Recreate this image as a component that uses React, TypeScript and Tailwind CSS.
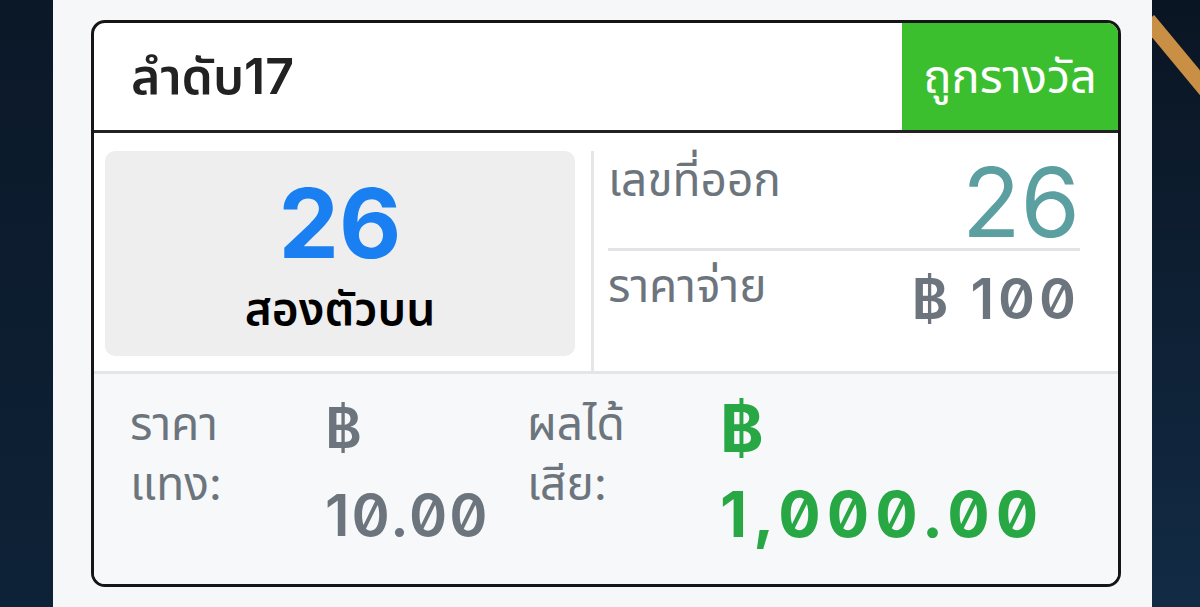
import React from "react";

const thai = "font-['Inter','Noto_Sans_Thai','Noto_Sans',sans-serif]";

const App: React.FC = () => {
  return (
    <div className={`flex h-[607px] w-full overflow-hidden ${thai}`}>
      {/* left backdrop */}
      <div className="w-[53px] bg-gradient-to-b from-[#0b1828] to-[#0e2237]" />

      {/* page panel */}
      <div className="flex-1 bg-[#f6f7f9] pl-[38px] pr-[31px] pt-[20px]">
        <div className="flex h-[567px] flex-col overflow-hidden rounded-[14px] border-[3px] border-[#151515] bg-white">
          {/* header */}
          <div className="flex h-[110px] border-b-[3px] border-[#222]">
            <div className="flex flex-1 items-center pl-[37px] text-[50px] font-semibold text-[#222]">
              ลำดับ17
            </div>
            <div className="flex w-[216px] items-center justify-center bg-[#3cbf2f] text-[47px] text-white">
              ถูกรางวัล
            </div>
          </div>

          {/* number + result */}
          <div className="flex h-[238px] pl-[11px] pr-[38px]">
            <div className="mt-[18px] mb-[15px] flex w-[470px] flex-col items-center justify-center rounded-[10px] bg-[#eeeeee]">
              <div className="mt-[4px] text-[96px] font-bold leading-[84px] text-[#1a80f2] slashed-zero">26</div>
              <div className="mt-[20px] text-[46px] font-semibold leading-none text-black">สองตัวบน</div>
            </div>
            <div className="ml-[16px] mt-[18px] w-[3px] bg-[#e4e6e9]" />
            <div className="flex flex-1 flex-col pl-[14px]">
              <div className="flex items-start justify-between border-b-[3px] border-[#e2e4e8] pt-[16px] pb-[6px]">
                <span className="text-[46px] leading-[60px] text-[#6c757d]">เลขที่ออก</span>
                <span className="mt-[13px] text-[96px] leading-[80px] text-[#5b9fa1] slashed-zero">26</span>
              </div>
              <div className="flex items-start justify-between pt-[4px]">
                <span className="text-[46px] leading-[60px] text-[#6c757d]">ราคาจ่าย</span>
                <span className="mt-[16px] text-[56px] font-semibold leading-none tracking-[4px] text-[#6c757d] slashed-zero">
                  ฿ 100
                </span>
              </div>
            </div>
          </div>

          {/* stake / win */}
          <div className="flex flex-1 border-t-[3px] border-[#e3e5e8] bg-[#f7f8fa] pl-[36px] pt-[19px]">
            <div className="w-[195px] text-[46px] leading-[60px] text-[#6c757d]">
              ราคา
              <br />
              แทง:
            </div>
            <div className="w-[202px] font-semibold text-[#6c757d] slashed-zero">
              <div className="mt-[3px] text-[56px] leading-[64px]">฿</div>
              <div className="mt-[15px] text-[58px] leading-[80px] tracking-[2px]">10.00</div>
            </div>
            <div className="w-[193px] text-[46px] leading-[60px] text-[#6c757d]">
              ผลได้
              <br />
              เสีย:
            </div>
            <div className="font-bold text-[#28a745] slashed-zero">
              <div className="mt-[3px] text-[66px] leading-[64px]">฿</div>
              <div className="mt-[14px] text-[63px] leading-[80px] tracking-[6px]">1,000.00</div>
            </div>
          </div>
        </div>
      </div>

      {/* right backdrop */}
      <div className="relative w-[48px] overflow-hidden bg-gradient-to-b from-[#0a1523] to-[#122b45]">
        <svg className="absolute left-0 top-0" width="48" height="120" viewBox="0 0 48 120">
          <line x1="-4" y1="20" x2="54" y2="90" stroke="#c98f45" strokeWidth="16" />
        </svg>
      </div>
    </div>
  );
};

export default App;
